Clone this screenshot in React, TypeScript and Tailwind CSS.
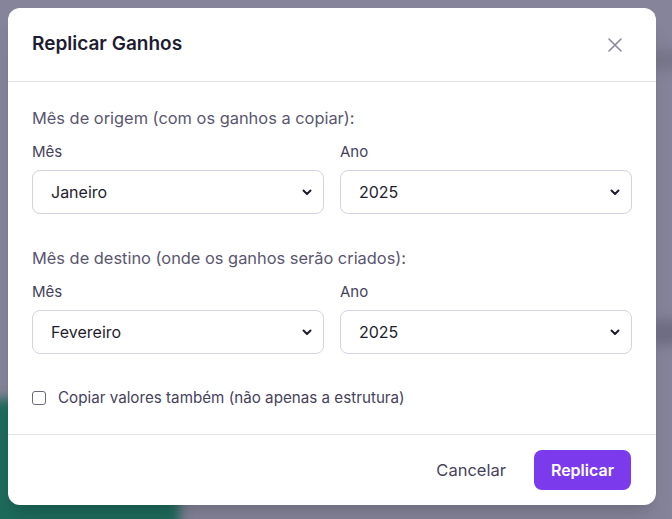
import { useState } from "react";

const meses = [
  "Janeiro",
  "Fevereiro",
  "Março",
  "Abril",
  "Maio",
  "Junho",
  "Julho",
  "Agosto",
  "Setembro",
  "Outubro",
  "Novembro",
  "Dezembro",
];
const anos = ["2024", "2025", "2026"];

function Chevron() {
  return (
    <svg
      width="12"
      height="12"
      viewBox="0 0 12 12"
      fill="none"
      className="pointer-events-none absolute right-[11px] top-1/2 -translate-y-1/2"
    >
      <path d="M2.5 4.5 6 8l3.5-3.5" stroke="#1f1d2e" strokeWidth="2" strokeLinecap="round" strokeLinejoin="round" />
    </svg>
  );
}

function SelectField({
  label,
  value,
  options,
  onChange,
}: {
  label: string;
  value: string;
  options: string[];
  onChange: (v: string) => void;
}) {
  return (
    <div className="flex flex-col">
      <label className="mb-1.5 text-[15px] leading-6 text-[#46425c]">{label}</label>
      <div className="relative">
        <select
          value={value}
          onChange={(e) => onChange(e.target.value)}
          className="h-[44px] w-full appearance-none rounded-lg border border-[#d4d2e3] bg-white pl-[18px] pr-8 text-[16px] text-[#1f1d2e] outline-none"
        >
          {options.map((o) => (
            <option key={o}>{o}</option>
          ))}
        </select>
        <Chevron />
      </div>
    </div>
  );
}

export default function App() {
  const [origemMes, setOrigemMes] = useState("Janeiro");
  const [origemAno, setOrigemAno] = useState("2025");
  const [destinoMes, setDestinoMes] = useState("Fevereiro");
  const [destinoAno, setDestinoAno] = useState("2025");
  const [copiar, setCopiar] = useState(false);

  return (
    <div
      className="relative h-[519px] w-[672px] overflow-hidden bg-[#85849a]"
      style={{ fontFamily: "Inter, 'Noto Sans', sans-serif" }}
    >
      {/* blurred page behind the overlay */}
      <div className="absolute bottom-[-20px] left-[-20px] h-[140px] w-[200px] rounded-2xl bg-[#1d6a5b] blur-[6px]" />
      <div className="absolute right-[-10px] top-[50px] h-[20px] w-[30px] bg-[#76758a] blur-[6px]" />
      <div className="absolute right-[-10px] top-[320px] h-[25px] w-[30px] bg-[#6e6d82] blur-[6px]" />

      <div className="relative flex h-full items-start pl-2 pt-2">
        <div className="flex h-[497px] w-[648px] flex-col rounded-xl bg-white shadow-xl">
          <div className="flex h-[74px] items-center justify-between border-b border-[#e2e1ec] px-6">
            <h2 className="text-[19px] font-semibold text-[#1e1c33]">Replicar Ganhos</h2>
            <button className="mr-[9px] text-[#8a879f]">
              <svg width="16" height="16" viewBox="0 0 16 16" fill="none">
                <path d="M2 2l12 12M14 2 2 14" stroke="currentColor" strokeWidth="1.6" strokeLinecap="round" />
              </svg>
            </button>
          </div>

          <div className="flex flex-col px-6 pb-6 pt-6">
            <p className="mb-2.5 text-[16.4px] leading-6 text-[#5a566f]">Mês de origem (com os ganhos a copiar):</p>
            <div className="grid grid-cols-2 gap-4">
              <SelectField label="Mês" value={origemMes} options={meses} onChange={setOrigemMes} />
              <SelectField label="Ano" value={origemAno} options={anos} onChange={setOrigemAno} />
            </div>

            <p className="mb-2.5 mt-8 text-[16.4px] leading-6 text-[#5a566f]">
              Mês de destino (onde os ganhos serão criados):
            </p>
            <div className="grid grid-cols-2 gap-4">
              <SelectField label="Mês" value={destinoMes} options={meses} onChange={setDestinoMes} />
              <SelectField label="Ano" value={destinoAno} options={anos} onChange={setDestinoAno} />
            </div>

            <label className="mt-8 flex items-center gap-3 text-[15.2px] leading-6 text-[#46425c]">
              <input
                type="checkbox"
                checked={copiar}
                onChange={(e) => setCopiar(e.target.checked)}
                className="h-[14px] w-[14px] appearance-none rounded-[3px] border-[1.5px] border-[#6b6a7a] bg-white checked:bg-[#7c3aed]"
              />
              Copiar valores também (não apenas a estrutura)
            </label>
          </div>

          <div className="flex flex-1 items-center justify-end gap-3 border-t border-[#e2e1ec] pl-6 pr-[25px]">
            <button className="px-4 py-2 text-[16.5px] text-[#46425c]">Cancelar</button>
            <button className="h-10 rounded-lg bg-[#7c3aed] px-[17px] text-[16px] font-semibold text-white">
              Replicar
            </button>
          </div>
        </div>
      </div>
    </div>
  );
}
